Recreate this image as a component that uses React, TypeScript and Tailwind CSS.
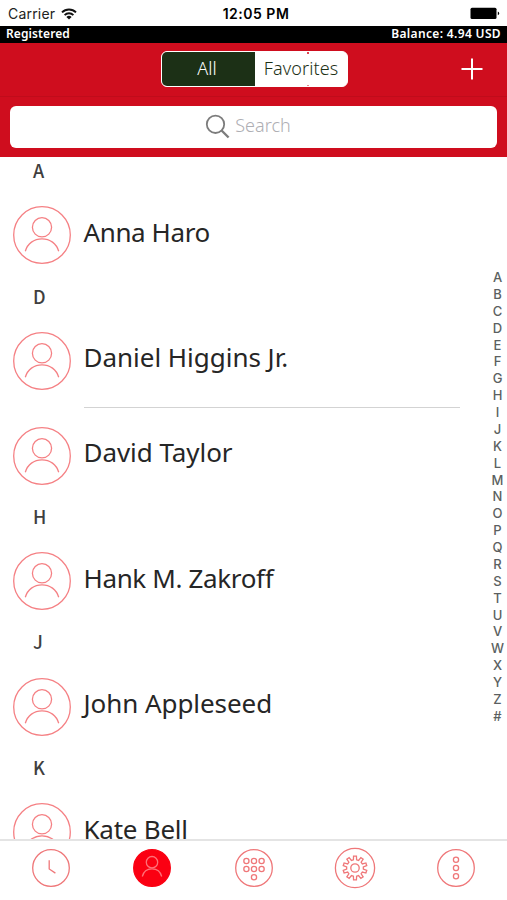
import React from 'react';

interface Contact {
  name: string;
  spacing: string;
}

interface Section {
  letter: string;
  contacts: Contact[];
}

const sections: Section[] = [
  { letter: 'A', contacts: [{ name: 'Anna Haro', spacing: 'tracking-[-0.4px]' }] },
  {
    letter: 'D',
    contacts: [
      { name: 'Daniel Higgins Jr.', spacing: 'tracking-[-0.02px]' },
      { name: 'David Taylor', spacing: 'tracking-[-0.05px]' },
    ],
  },
  { letter: 'H', contacts: [{ name: 'Hank M. Zakroff', spacing: 'tracking-[-0.35px]' }] },
  { letter: 'J', contacts: [{ name: 'John Appleseed', spacing: 'tracking-[-0.06px]' }] },
  { letter: 'K', contacts: [{ name: 'Kate Bell', spacing: 'tracking-[-0.25px]' }] },
];

const indexLetters = 'ABCDEFGHIJKLMNOPQRSTUVWXYZ#'.split('');

export default function App() {
  return (
    <div className="flex h-[900px] w-[507px] flex-col overflow-hidden bg-white font-['Noto_Sans',sans-serif]">
      <StatusBar />
      <div className="flex h-[17px] shrink-0 items-center justify-between bg-black pr-[6px] pl-[6px] text-[12px] leading-none font-semibold text-white">
        <span className="tracking-[0.1px]">Registered</span>
        <span className="tracking-[0.35px]">Balance: 4.94 USD</span>
      </div>
      <Header />
      <div className="relative min-h-0 flex-1 overflow-hidden pt-[0.3px]">
        {sections.map((section) => (
          <ContactSection key={section.letter} section={section} />
        ))}
        {/* Alphabet index floats over the list */}
        <div className="absolute top-[112px] right-0 flex w-[19px] flex-col items-center font-['Inter',sans-serif] text-[13px] font-medium text-[#5b5f61]">
          {indexLetters.map((letter) => (
            <span key={letter} className="h-[16.88px] leading-[16.88px]">{letter}</span>
          ))}
        </div>
      </div>
      <TabBar />
    </div>
  );
}

function StatusBar() {
  return (
    <div className="grid h-[25.5px] shrink-0 grid-cols-3 items-center bg-white pr-[7px] pl-[8px] font-['Inter',sans-serif] text-[14px] leading-none text-[#222] pt-[2px]">
      <div className="flex items-center gap-[6px]">
        <span className="tracking-[0.2px]">Carrier</span>
        <svg width="16" height="12" viewBox="0 0 16 12" fill="none" stroke="#111" strokeWidth="1.9">
          <path d="M1 4.4a9.8 9.8 0 0 1 14 0" />
          <path d="M3.6 7.1a6.2 6.2 0 0 1 8.8 0" />
          <path d="M8 11.6 5.4 9a3.7 3.7 0 0 1 5.2 0Z" fill="#111" stroke="none" />
        </svg>
      </div>
      <span className="pl-[4px] text-center font-semibold tracking-[0.5px] whitespace-nowrap text-black">12:05 PM</span>
      <svg className="justify-self-end" width="30" height="13" viewBox="0 0 30 13">
        <rect x="0.5" y="0.8" width="26" height="11.2" rx="1.5" fill="#000" />
        <path d="M27.8 4.6q1.4.6 1.4 1.8t-1.4 1.8z" fill="#000" />
      </svg>
    </div>
  );
}

function Header() {
  return (
    <div className="h-[114.5px] shrink-0 bg-[#cf0d1e]">
      <div className="grid h-[54.5px] grid-cols-[161px_187px_1fr] items-center border-b border-[#c00c1b]">
        <div />
        <div className="relative flex h-[36px] overflow-hidden rounded-[6px] border border-white bg-white text-[18px]">
          <div className="flex w-[93px] items-center justify-center border-r border-[#1c3016] bg-[#1c3016] pr-[2px] pb-[2px] font-light text-white">
            All
          </div>
          <div className="flex flex-1 items-center justify-center pb-[2px] font-light tracking-[0.1px] text-[#1c3016]">Favorites</div>
          <span className="absolute top-0 left-[145px] h-[2px] w-[2px] bg-[#dd4450]" />
          <span className="absolute bottom-0 left-[145px] h-px w-[2px] bg-[#e98a92]" />
        </div>
        <svg className="mr-[24px] justify-self-end" width="22" height="22" viewBox="0 0 22 22" stroke="#fff" strokeWidth="2">
          <path d="M11 .5v21M.5 11h21" />
        </svg>
      </div>
      <div className="mx-[10px] mt-[8.5px] flex h-[42px] items-center justify-center gap-[5px] rounded-[6px] bg-white pr-[11px]">
        <svg width="25" height="25" viewBox="0 0 25 25" fill="none" stroke="#7c7c7c" strokeWidth="1.8">
          <circle cx="10.5" cy="10.3" r="8.7" />
          <path d="m16.6 16.5 7 7" strokeWidth="2.4" />
        </svg>
        <span className="pb-[4px] text-[18px] leading-none font-light text-[#aeaeb3]">Search</span>
      </div>
    </div>
  );
}

function ContactSection({ section }: { section: Section }) {
  return (
    <div>
      <div className="flex h-[30.75px] items-center pb-[5px] pl-[33px] font-['Noto_Sans_CJK_JP',sans-serif] text-[18px] leading-none font-medium text-[#3f3f3f]">
        {section.letter}
      </div>
      {section.contacts.map((contact, i) => (
        <div key={contact.name} className="flex h-[94.75px] pl-[13px]">
          <div className="flex items-center">
            <PersonIcon />
          </div>
          <div
            className={`ml-[12.5px] flex w-[376.5px] items-center pb-[7px] text-[26px] leading-none whitespace-nowrap text-[#262626] ${contact.spacing} ${
              i < section.contacts.length - 1 ? 'border-b border-[#d3d3d3]' : ''
            }`}
          >
            {contact.name}
          </div>
        </div>
      ))}
    </div>
  );
}

function PersonIcon() {
  return (
    <svg width="58" height="58" viewBox="0 0 58 58" fill="none" stroke="#f58084" strokeWidth="1.3">
      <circle cx="29" cy="29" r="28.3" />
      <circle cx="29" cy="21.3" r="9.6" />
      <path d="M12.3 45.3C14.5 37.5 21 32.8 29 32.8s14.5 4.7 16.7 12.5" />
    </svg>
  );
}

// Outline of the settings wheel, teeth spread evenly round the hub
function gearPath(teeth: number) {
  const points: string[] = [];
  const step = (Math.PI * 2) / teeth;
  for (let i = 0; i < teeth; i++) {
    const a = i * step - Math.PI / 2;
    [
      [8.4, -0.19],
      [12, -0.12],
      [12, 0.12],
      [8.4, 0.19],
    ].forEach(([r, offset]) => {
      points.push(`${(21 + r * Math.cos(a + offset)).toFixed(2)} ${(21 + r * Math.sin(a + offset)).toFixed(2)}`);
    });
  }
  return `M${points.join('L')}Z`;
}

function TabIcon({ children, r = 18.3, active = false }: { children: React.ReactNode; r?: number; active?: boolean }) {
  return (
    <div className="flex flex-1 justify-center">
      <svg width="42" height="42" viewBox="0 0 42 42" fill="none" stroke={active ? '#ff7078' : '#ef7779'} strokeWidth="1.3">
        <circle cx="21" cy="21" r={r} fill={active ? '#fb0012' : 'none'} stroke={active ? '#fb0012' : '#ef7779'} />
        {children}
      </svg>
    </div>
  );
}

function TabBar() {
  return (
    <div className="flex h-[61.5px] shrink-0 items-center border-t-2 border-[#e4e4e4] bg-white pb-[5px]">
      <TabIcon>
        <path d="M19.2 13.2v8.8l6.2 4.1" />
      </TabIcon>
      <TabIcon active>
        <circle cx="21" cy="15.2" r="5.7" />
        <path d="M11.3 29.5c1.2-4.8 5-7.6 9.7-7.6s8.5 2.8 9.7 7.6" />
      </TabIcon>
      <TabIcon>
        {[13.4, 21, 28.6].map((x) => (
          <React.Fragment key={x}>
            <circle cx={x} cy="14" r="2.6" />
            <circle cx={x} cy="22" r="2.6" />
          </React.Fragment>
        ))}
        <circle cx="21" cy="30.3" r="2.6" />
      </TabIcon>
      <TabIcon r={19.6}>
        <path d={gearPath(10)} />
        <circle cx="21" cy="21" r="4.2" />
      </TabIcon>
      <TabIcon>
        <circle cx="21" cy="12.7" r="2.6" />
        <circle cx="21" cy="21" r="2.6" />
        <circle cx="21" cy="29.3" r="2.6" />
      </TabIcon>
    </div>
  );
}
